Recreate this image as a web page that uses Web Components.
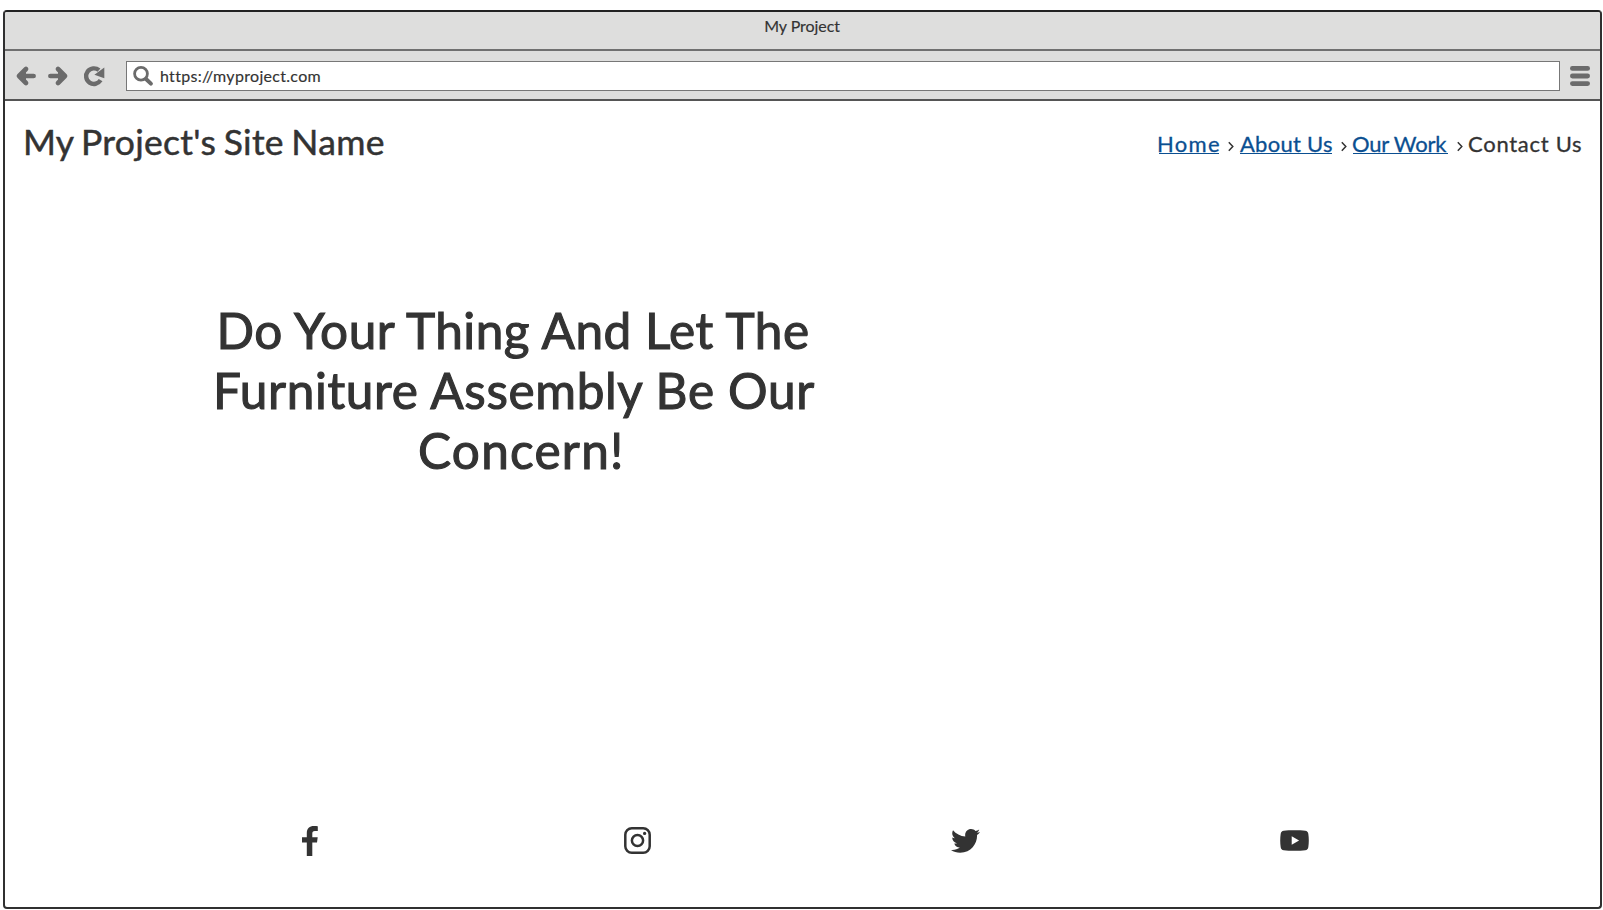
<!DOCTYPE html>
<html lang="en">
<head>
<meta charset="utf-8">
<title>My Project</title>
<style>
html,body{margin:0;height:100%;background:#fff}
body{font-family:Lato,"Liberation Sans",sans-serif;color:#333;overflow:hidden}
</style>
</head>
<body>
<browser-window></browser-window>
<script>
const define = (name, html, ready) => customElements.define(name, class extends HTMLElement {
  constructor() {
    super();
    this.attachShadow({ mode: 'open' }).innerHTML = html;
  }
  connectedCallback() { if (ready) ready(this); }
});

// A line of text whose ink is tracked to fill the width given in the "span" attribute.
const ctx = document.createElement('canvas').getContext('2d');
define('tracked-text', `<style>
  :host{display:block;white-space:pre;flex:none;-webkit-text-stroke:var(--ink,.3px)}
</style><slot></slot>`, el => {
  const text = el.textContent, span = +el.getAttribute('span');
  const cs = getComputedStyle(el);
  ctx.font = `${cs.fontWeight} ${cs.fontSize} ${cs.fontFamily}`;
  const m = ctx.measureText(text);
  const ink = m.actualBoundingBoxLeft + m.actualBoundingBoxRight;
  el.style.width = span + 'px';
  el.style.letterSpacing = (span - ink) / (text.length - 1) + 'px';
  el.style.textIndent = m.actualBoundingBoxLeft + 'px';
});

const icons = {
  back: [22, 22, '<path d="M18.6 11H4M11 4 4 11l7 7" fill="none" stroke="currentColor" stroke-width="4.7" stroke-linecap="round" stroke-linejoin="round"/><path d="M3 11l8-6v12z"/>'],
  forward: [22, 22, '<path d="M3.4 11H18M11 4l7 7-7 7" fill="none" stroke="currentColor" stroke-width="4.7" stroke-linecap="round" stroke-linejoin="round"/><path d="M19 11l-8-6v12z"/>'],
  reload: [22, 22, '<path d="M16 5.2A7.8 7.8 0 1 0 17.6 15.2" fill="none" stroke="currentColor" stroke-width="4.4"/><path d="M21.3 2.6v10.6L11.4 9.8z"/>'],
  search: [22, 22, '<circle cx="9" cy="8.7" r="6.4" fill="none" stroke="currentColor" stroke-width="2.8"/><path d="M14 14l4.9 4.6" stroke="currentColor" stroke-width="4" stroke-linecap="round"/>'],
  menu: [20, 20, '<rect width="20" height="4.8" rx="2.4"/><rect y="7.6" width="20" height="4.8" rx="2.4"/><rect y="15.2" width="20" height="4.8" rx="2.4"/>'],
  facebook: [16, 30, '<path d="M15.8.2v4.9h-2.9c-2.1 0-2.6 1-2.6 2.6v3.6h5.4l-.7 5.3h-4.7V30H4.8V16.6H0v-5.3h4.8V7.2C4.8 2.5 7.7 0 11.8 0c2 0 3.5.1 4 .2z"/>'],
  instagram: [27, 27, '<rect x="1.3" y="1.3" width="24.4" height="24.4" rx="6.5" fill="none" stroke="currentColor" stroke-width="2.5"/><circle cx="13.5" cy="13.5" r="5.6" fill="none" stroke="currentColor" stroke-width="2.5"/><circle cx="20.6" cy="6.4" r="1.6"/>'],
  twitter: [29, 24, '<path transform="scale(.0567) translate(0 -46)" d="M459.37 151.716c.325 4.548.325 9.097.325 13.645 0 138.72-105.583 298.558-298.558 298.558-59.452 0-114.68-17.219-161.137-47.106 8.447.974 16.568 1.299 25.34 1.299 49.055 0 94.213-16.568 130.274-44.832-46.132-.975-84.792-31.188-98.112-72.772 6.498.974 12.995 1.624 19.818 1.624 9.421 0 18.843-1.3 27.614-3.573-48.081-9.747-84.143-51.98-84.143-102.985v-1.299c13.969 7.797 30.214 12.67 47.431 13.319-28.264-18.843-46.781-51.005-46.781-87.391 0-19.492 5.197-37.36 14.294-52.954 51.655 63.675 129.3 105.258 216.365 109.807-1.624-7.797-2.599-15.918-2.599-24.04 0-57.828 46.782-104.934 104.934-104.934 30.213 0 57.502 12.67 76.67 33.137 23.715-4.548 46.456-13.32 66.599-25.34-7.798 24.366-24.366 44.833-46.132 57.827 21.117-2.273 41.584-8.122 60.426-16.243-14.292 20.791-32.161 39.308-52.628 54.253z"/>'],
  youtube: [29, 21, '<path fill-rule="evenodd" d="M14.5.2c4 0 8 .1 10.8.5 1.7.3 2.7 1.3 3 3 .3 2 .5 4.3.5 6.8s-.2 4.8-.5 6.8c-.3 1.7-1.3 2.7-3 3-2.8.4-6.8.5-10.8.5s-8-.1-10.8-.5c-1.7-.3-2.7-1.3-3-3-.3-2-.5-4.3-.5-6.8s.2-4.8.5-6.8c.3-1.7 1.300-2.700 3-3C6.500.3 10.500.2 14.500.2zM11.700 6.300v8.500l7.400-4.300z"/>']
};
define('ui-icon', `<style>:host{display:block;flex:none;line-height:0}svg{display:block;fill:currentColor}</style><span></span>`, el => {
  const [w, h, body] = icons[el.getAttribute('name')];
  el.shadowRoot.querySelector('span').innerHTML = `<svg width="${w}" height="${h}" viewBox="0 0 ${w} ${h}">${body}</svg>`;
});

define('title-bar', `<style>
  :host{display:flex;justify-content:center;height:39px;box-sizing:border-box;padding:2px 0 0 1px;background:#dededd;border-bottom:2px solid #707070;font-size:16px;line-height:23px;--ink:.15px}
</style><tracked-text span="75.5">My Project</tracked-text>`);

define('nav-toolbar', `<style>
  :host{display:flex;align-items:center;height:50px;box-sizing:border-box;background:#dededd;border-bottom:2px solid #555;padding:0 10px;color:#6b6b6b}
  .fwd{margin-left:10px}.re{margin-left:14px}
  .url{display:flex;align-items:center;flex:1;height:30px;box-sizing:border-box;margin:2px 10px 0 21px;border:1px solid #777;background:#fff;padding-left:5px;font-size:16px;line-height:24px}
  .url ui-icon{margin-top:-1px}
  tracked-text{color:#333;margin:-1px 0 0 7px;--ink:.15px}
  .bar{margin-top:2px}
</style>
<ui-icon class="bar" name="back"></ui-icon><ui-icon class="bar fwd" name="forward"></ui-icon><ui-icon class="bar re" name="reload"></ui-icon>
<div class="url"><ui-icon name="search"></ui-icon><tracked-text span="159">https://myproject.com</tracked-text></div>
<ui-icon class="bar" name="menu"></ui-icon>`);

define('crumb-link', `<style>:host{display:block;color:#0b4f91;border-bottom:1px solid #0b4f91;height:25px;box-sizing:border-box}</style><slot></slot>`);

define('crumb-mark', `<style>:host{display:block;width:6px;padding-top:12px}svg{display:block}</style>
<svg width="6" height="11" viewBox="0 0 6 11"><path d="M.8 1.3 4.8 5.5.8 9.7" fill="none" stroke="#333" stroke-width="1.5"/></svg>`);

define('site-header', `<style>
  :host{display:flex;justify-content:space-between;align-items:flex-start;padding:18px 19px 0 20px}
  .name{font-size:35.5px;line-height:44px;margin:1px 0 0 1px;word-spacing:-2px;--ink:.5px}
  nav{display:flex;padding-top:10px;font-size:22px;line-height:30px}
  crumb-mark{margin:0 6px 0 9px}
</style>
<tracked-text class="name" span="364.5" style="margin-right:-6px">My Project's Site Name</tracked-text>
<nav>
  <crumb-link><tracked-text span="60">Home</tracked-text></crumb-link><crumb-mark></crumb-mark>
  <crumb-link><tracked-text span="92">About Us</tracked-text></crumb-link><crumb-mark></crumb-mark>
  <crumb-link><tracked-text span="95">Our Work</tracked-text></crumb-link><crumb-mark></crumb-mark>
  <tracked-text span="112">Contact Us</tracked-text>
</nav>`);

define('hero-heading', `<style>
  :host{display:flex;flex-direction:column;align-items:center;width:610px;margin:136px 0 0 206px;font-size:49.5px;line-height:60px;--ink:1.1px}
  .first{margin-left:4px}
  .second{margin-left:2px}
  .last{margin-left:8px}
</style>
<tracked-text class="first" span="595">Do Your Thing And Let The</tracked-text>
<tracked-text class="second" span="600">Furniture Assembly Be Our</tracked-text>
<tracked-text class="last" span="200">Concern!</tracked-text>`);

define('social-links', `<style>
  :host{display:grid;grid-template-columns:repeat(4,328px);justify-items:center;align-items:center;height:30px;margin:auto 0 51px 141px}
  .wide{margin-right:1px}
  .raised{margin-bottom:1px}
</style>
<ui-icon name="facebook"></ui-icon><ui-icon class="raised wide" name="instagram"></ui-icon><ui-icon class="wide" name="twitter"></ui-icon><ui-icon class="raised" name="youtube"></ui-icon>`);

define('browser-window', `<style>
  :host{display:flex;flex-direction:column;box-sizing:border-box;width:1599px;height:899px;margin:10px 0 0 3px;border:2px solid #303030;border-top-color:#222;border-radius:4px;background:#fff;overflow:hidden}
</style>
<title-bar></title-bar><nav-toolbar></nav-toolbar><site-header></site-header><hero-heading></hero-heading><social-links></social-links>`);
</script>
</body>
</html>
